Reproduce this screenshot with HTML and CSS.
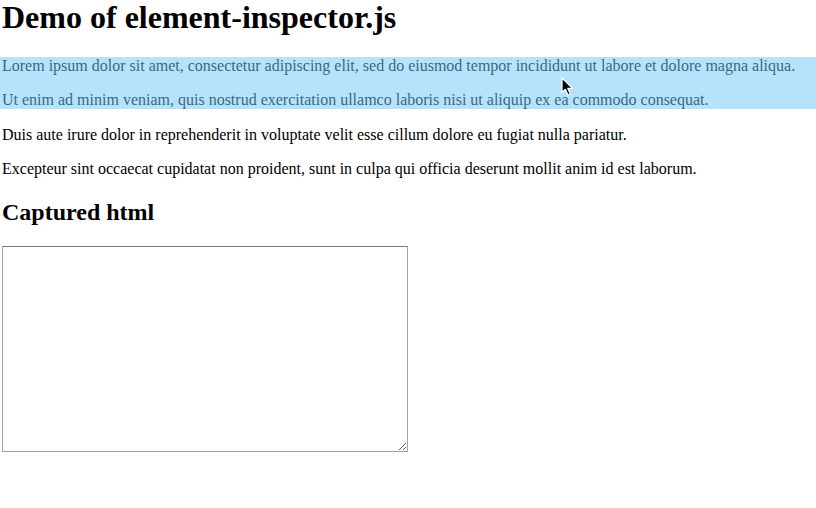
FILE: index.html
```html
<!DOCTYPE html>
<html>
<head>
<meta charset="utf-8">
<title>Demo of element-inspector.js</title>
<link rel="stylesheet" href="styles.css">
</head>
<body>
<div class="page">
  <h1 class="title">Demo of element-inspector.js</h1>
  <div class="inspected">
    <p class="para">Lorem ipsum dolor sit amet, consectetur adipiscing elit, sed do eiusmod tempor incididunt ut labore et dolore magna aliqua.</p>
    <p class="para">Ut enim ad minim veniam, quis nostrud exercitation ullamco laboris nisi ut aliquip ex ea commodo consequat.</p>
    <div class="highlight"></div>
    <svg class="cursor" width="13" height="19" viewBox="0 0 13 19" aria-hidden="true">
      <path d="M1 1 L1 15.5 L4.4 12.3 L7 18 L9.3 17 L6.8 11.4 L11.5 11.4 Z" fill="#000" stroke="#fff" stroke-width="1.2" stroke-linejoin="round"/>
    </svg>
  </div>
  <p class="para first-plain">Duis aute irure dolor in reprehenderit in voluptate velit esse cillum dolore eu fugiat nulla pariatur.</p>
  <p class="para">Excepteur sint occaecat cupidatat non proident, sunt in culpa qui officia deserunt mollit anim id est laborum.</p>
  <h2 class="subtitle">Captured html</h2>
  <div class="capture-wrap">
    <textarea class="capture"></textarea>
  </div>
</div>
</body>
</html>
```

FILE: styles.css
```css
html, body {
  margin: 0;
  padding: 0;
  background: #fff;
}

body {
  font-family: "Liberation Serif", "Times New Roman", serif;
  font-size: 16px;
  color: #000;
}

.page {
  padding: 0 2px;
}

.title {
  font-size: 32px;
  font-weight: bold;
  margin: -1px 0 21px;
}

.para {
  margin: 16px 0;
}

.first-plain {
  margin-top: 17px;
}

.inspected {
  position: relative;
}

.highlight {
  position: absolute;
  top: 0;
  bottom: 0;
  left: -2px;
  right: -2px;
  background: rgba(110, 200, 248, 0.5);
}

.cursor {
  position: absolute;
  left: 559px;
  top: 20px;
}

.subtitle {
  font-size: 24px;
  font-weight: bold;
  margin: 21px 0 18px;
}

.capture-wrap {
  padding-top: 2px;
}

.capture {
  display: block;
  box-sizing: border-box;
  width: 406px;
  height: 206px;
  margin: 0;
  padding: 2px;
  border: 1px solid #a3a3a3;
  border-top-color: #7a7a7a;
  background: #fff;
  font-family: "Liberation Mono", monospace;
  font-size: 13px;
}
```
